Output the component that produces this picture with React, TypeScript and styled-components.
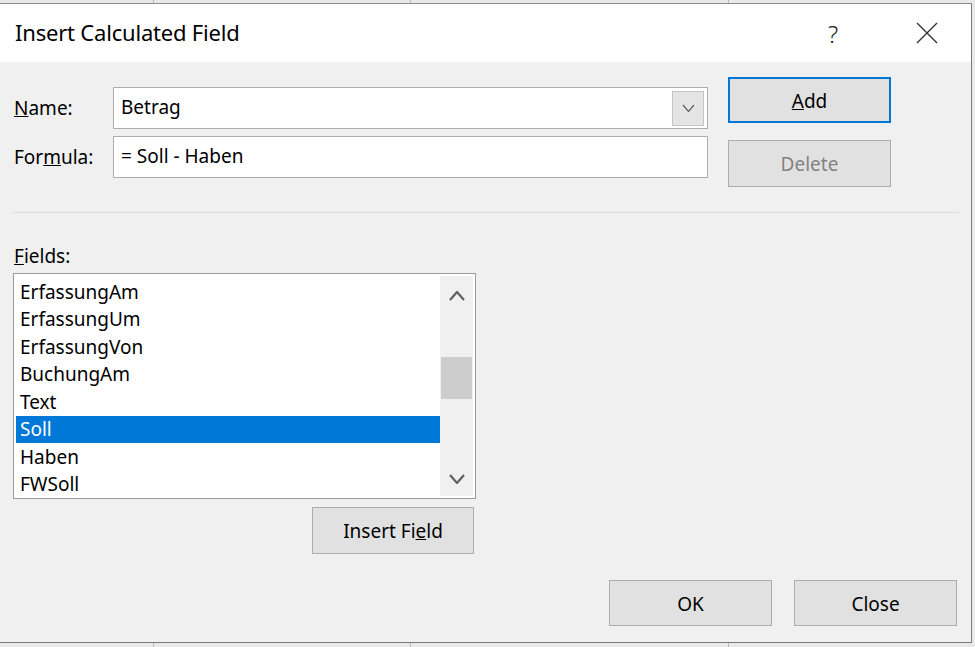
import React from "react";
import styled, { createGlobalStyle } from "styled-components";

const Global = createGlobalStyle`
  html, body { margin: 0; padding: 0; }
  body {
    width: 975px;
    height: 647px;
    overflow: hidden;
    background-color: #e9e9e9;
    background-image:
      linear-gradient(to right, transparent 153px, #b9b9b9 153px, #b9b9b9 154px, transparent 154px),
      linear-gradient(to right, transparent 410px, #b9b9b9 410px, #b9b9b9 411px, transparent 411px),
      linear-gradient(to right, transparent 728px, #b9b9b9 728px, #b9b9b9 729px, transparent 729px);
    font-family: "Noto Sans", "Open Sans", sans-serif;
    color: #000;
  }
`;

const Dialog = styled.div`
  margin-top: 3px;
  width: 972px;
  height: 640px;
  box-sizing: border-box;
  border-top: 1px solid #8a8a8a;
  border-right: 1px solid #7a7a7a;
  border-bottom: 1px solid #7a7a7a;
  background: #f0f0f0;
  display: flex;
  flex-direction: column;
`;

const TitleBar = styled.div`
  height: 58px;
  background: #ffffff;
  display: flex;
  align-items: center;
  padding-left: 15px;
  flex-shrink: 0;
`;

const Title = styled.div`
  flex: 1;
  font-size: 22px;
  letter-spacing: -0.2px;
  color: #000;
  padding-bottom: 2px;
`;

const TitleButton = styled.div<{ $ml?: number; $mr?: number }>`
  width: 48px;
  height: 58px;
  margin-left: ${(p) => p.$ml ?? 0}px;
  margin-right: ${(p) => p.$mr ?? 0}px;
  display: flex;
  align-items: center;
  justify-content: center;
  color: #222;
  font-size: 24px;
  font-weight: 300;
`;

const Body = styled.div`
  flex: 1;
  display: flex;
  flex-direction: column;
  padding: 15px 14px 0 13px;
`;

const TopSection = styled.div`
  display: flex;
  align-items: flex-start;
`;

const FieldsGrid = styled.div`
  margin-top: 10px;
  display: grid;
  grid-template-columns: 100px 595px;
  row-gap: 7px;
  align-items: center;
`;

const Label = styled.label`
  font-size: 19px;
  padding-left: 1px;
`;

const TextBox = styled.div`
  height: 42px;
  box-sizing: border-box;
  border: 1px solid #adadad;
  background: #fff;
  display: flex;
  align-items: center;
  padding: 0 3px 0 7px;
  font-size: 19px;
`;

const TextValue = styled.span`
  flex: 1;
  padding-bottom: 3px;
`;

const DropButton = styled.div`
  width: 32px;
  height: 35px;
  box-sizing: border-box;
  border: 1px solid #c4c4c4;
  background: #e5e5e5;
  display: flex;
  align-items: center;
  justify-content: center;
`;

const ButtonColumn = styled.div`
  margin-left: 20px;
  display: flex;
  flex-direction: column;
  gap: 17px;
`;

const Button = styled.button<{ $focused?: boolean; $disabled?: boolean; $w?: number; $h?: number; $mr?: number }>`
  width: ${(p) => p.$w ?? 163}px;
  height: ${(p) => p.$h ?? 46}px;
  box-sizing: border-box;
  margin: 0 ${(p) => p.$mr ?? 0}px 0 0;
  padding: 1px 0 0;
  background: #e1e1e1;
  border: ${(p) => (p.$focused ? "2px solid #0078d7" : "1px solid #adadad")};
  color: ${(p) => (p.$disabled ? "#838383" : "#000")};
  font-family: "Noto Sans", "Open Sans", sans-serif;
  font-size: 19px;
  display: flex;
  align-items: center;
  justify-content: center;
  cursor: default;
`;

const Separator = styled.div`
  margin-top: 25px;
  height: 1px;
  width: 946px;
  background: #dadada;
`;

const FieldsLabel = styled(Label)`
  margin-top: 28px;
  height: 30px;
  display: flex;
  align-items: center;
`;

const ListColumn = styled.div`
  width: 463px;
  display: flex;
  flex-direction: column;
  align-items: flex-end;
  gap: 8px;
  margin-top: 2px;
`;

const ListBox = styled.div`
  width: 463px;
  height: 226px;
  box-sizing: border-box;
  border: 1px solid #9a9a9a;
  background: #fff;
  display: flex;
  padding: 2px 2px 2px 1px;
`;

const Items = styled.div`
  flex: 1;
  padding-top: 2px;
  padding-left: 1px;
  overflow: hidden;
`;

const Item = styled.div<{ $selected?: boolean }>`
  height: 27.5px;
  display: flex;
  align-items: center;
  padding-left: 4px;
  font-size: 19px;
  background: ${(p) => (p.$selected ? "#0078d7" : "transparent")};
  color: ${(p) => (p.$selected ? "#fff" : "#000")};
`;

const ScrollBar = styled.div`
  width: 33px;
  background: #f0f0f0;
  display: flex;
  flex-direction: column;
  align-items: center;
`;

const ScrollArrow = styled.div<{ $h: number }>`
  height: ${(p) => p.$h}px;
  width: 100%;
  display: flex;
  align-items: center;
  justify-content: center;
`;

const ScrollTrack = styled.div`
  flex: 1;
  width: 100%;
  padding-top: 41px;
  box-sizing: border-box;
`;

const Thumb = styled.div`
  margin: 0 1px;
  height: 42px;
  background: #cdcdcd;
`;

const Footer = styled.div`
  margin-top: auto;
  margin-bottom: 16px;
  display: flex;
  justify-content: flex-end;
  gap: 22px;
`;

const Chevron = ({ up, size = 12, stroke = 1.3 }: { up?: boolean; size?: number; stroke?: number }) => (
  <svg width={size} height={size / 2 + 2} viewBox={`0 0 ${size} ${size / 2 + 2}`}>
    <polyline
      points={
        up
          ? `1,${size / 2 + 1} ${size / 2},1 ${size - 1},${size / 2 + 1}`
          : `1,1 ${size / 2},${size / 2 + 1} ${size - 1},1`
      }
      fill="none"
      stroke="#606060"
      strokeWidth={stroke}
    />
  </svg>
);

const items = ["ErfassungAm", "ErfassungUm", "ErfassungVon", "BuchungAm", "Text", "Soll", "Haben", "FWSoll"];

export default function App() {
  return (
    <>
      <Global />
      <Dialog>
        <TitleBar>
          <Title>Insert Calculated Field</Title>
          <TitleButton>?</TitleButton>
          <TitleButton $ml={46} $mr={20}>
            <svg width="22" height="22" viewBox="0 0 22 22">
              <path d="M1 1 L21 21 M21 1 L1 21" stroke="#333" strokeWidth="1.4" fill="none" />
            </svg>
          </TitleButton>
        </TitleBar>
        <Body>
          <TopSection>
            <FieldsGrid>
              <Label>
                <u>N</u>ame:
              </Label>
              <TextBox>
                <TextValue>Betrag</TextValue>
                <DropButton>
                  <Chevron size={13} stroke={1.2} />
                </DropButton>
              </TextBox>
              <Label>
                For<u>m</u>ula:
              </Label>
              <TextBox>
                <TextValue>= Soll - Haben</TextValue>
              </TextBox>
            </FieldsGrid>
            <ButtonColumn>
              <Button $focused>
                <span>
                  <u>A</u>dd
                </span>
              </Button>
              <Button $disabled $h={47}>
                Delete
              </Button>
            </ButtonColumn>
          </TopSection>
          <Separator />
          <FieldsLabel>
            <span>
              <u>F</u>ields:
            </span>
          </FieldsLabel>
          <ListColumn>
            <ListBox>
              <Items>
                {items.map((it) => (
                  <Item key={it} $selected={it === "Soll"}>
                    {it}
                  </Item>
                ))}
              </Items>
              <ScrollBar>
                <ScrollArrow $h={40}>
                  <Chevron up size={16} stroke={2.2} />
                </ScrollArrow>
                <ScrollTrack>
                  <Thumb />
                </ScrollTrack>
                <ScrollArrow $h={34}>
                  <Chevron size={16} stroke={2.2} />
                </ScrollArrow>
              </ScrollBar>
            </ListBox>
            <Button $w={162} $h={47} $mr={2}>
              <span>
                Insert Fi<u>e</u>ld
              </span>
            </Button>
          </ListColumn>
          <Footer>
            <Button>OK</Button>
            <Button>Close</Button>
          </Footer>
        </Body>
      </Dialog>
    </>
  );
}
